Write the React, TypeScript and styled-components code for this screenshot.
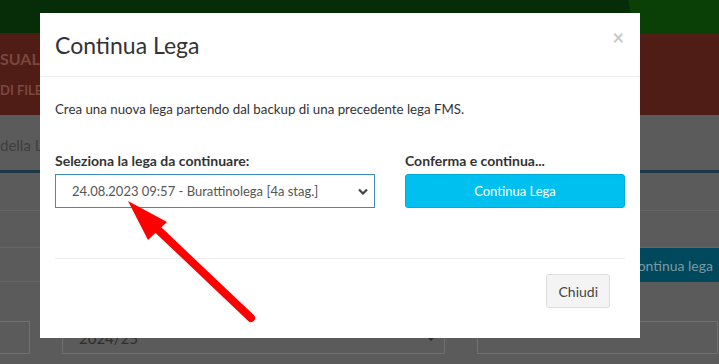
import React from 'react';
import styled, { createGlobalStyle } from 'styled-components';

// == styles =======================================================================================
const GlobalStyle = createGlobalStyle`
  html, body {
    margin: 0;
    padding: 0;
    width: 719px;
    height: 364px;
    overflow: hidden;
    background: #5b5b5b;
  }
  * {
    box-sizing: border-box;
  }
`;

const Page = styled.div`
  position: relative;
  width: 719px;
  height: 364px;
  overflow: hidden;
  font-family: Lato, 'Noto Sans', sans-serif;
  background: #5b5b5b;
`;

const TopBar = styled.div`
  height: 33px;
  background: linear-gradient( 78deg, #062c08 0, #062c08 87.5%, #0a4006 87.5% );
`;

const Banner = styled.div`
  height: 82px;
  background: #4f1c16;
  color: #7b4740;
  font-weight: 700;
  display: flex;
  flex-direction: column;
  gap: 14px;
  padding: 16px 0 0 0;
`;

const BannerTitle = styled.div`
  font-size: 16px;
`;

const BannerSub = styled.div`
  font-size: 13px;
`;

const Tabs = styled.div`
  height: 58px;
  border-bottom: 3px solid #1c3747;
  color: #3f3f3f;
  font-size: 15px;
  padding: 21px 0 0 0;
`;

const Row = styled.div<{ $h: number }>`
  height: ${ ( p ) => p.$h }px;
  border-bottom: 1px solid #666;
  display: flex;
  justify-content: flex-end;
`;

const GhostButton = styled.div`
  width: 89px;
  height: 34px;
  background: #00485c;
  color: #7a9aa3;
  font-size: 14px;
  display: flex;
  align-items: center;
  justify-content: flex-end;
  padding-right: 6px;
`;

const Inputs = styled.div`
  display: grid;
  grid-template-columns: 31px 383px 241px;
  column-gap: 32px;
  margin-top: 39px;
  margin-left: -1px;
`;

const GhostInput = styled.div`
  height: 33px;
  border: 1px solid #707070;
  color: #2e2e2e;
  font-size: 15px;
  display: flex;
  align-items: center;
  justify-content: space-between;
  padding: 0 8px 0 16px;
`;

const Backdrop = styled.div`
  position: absolute;
  inset: 0;
  display: flex;
  justify-content: flex-start;
  align-items: flex-start;
  padding: 13px 0 0 40px;
`;

const Modal = styled.div`
  width: 600px;
  height: 325px;
  background: #fff;
  color: #333;
  display: flex;
  flex-direction: column;
`;

const ModalHeader = styled.div`
  height: 64px;
  border-bottom: 1px solid #eee;
  display: flex;
  align-items: center;
  justify-content: space-between;
  padding: 0 15px;
`;

const Title = styled.h4`
  margin: 0;
  font-weight: 400;
  font-size: 23px;
  color: #333;
`;

const Close = styled.span`
  color: #c9c9c9;
  font-size: 20px;
  font-weight: 700;
  margin-top: -16px;
  margin-right: 1px;
`;

const ModalBody = styled.div`
  padding: 22px 15px 0;
  font-size: 14px;
`;

const Lead = styled.p`
  margin: 0 0 33px;
  line-height: 20px;
  font-size: 13.3px;
`;

const FormRow = styled.div`
  display: grid;
  grid-template-columns: 320px 220px;
  column-gap: 30px;
`;

const Label = styled.label`
  display: block;
  font-weight: 700;
  font-size: 14px;
  margin-bottom: 4px;
  line-height: 18px;
`;

const Select = styled.div`
  height: 34px;
  border: 1px solid #3c8dbc;
  color: #555;
  font-size: 13px;
  display: flex;
  align-items: center;
  justify-content: space-between;
  padding: 0 6px 0 16px;
`;

const PrimaryButton = styled.button`
  width: 100%;
  height: 34px;
  border: 1px solid #00acd6;
  border-radius: 3px;
  background: #00c0ef;
  color: #fff;
  font-family: inherit;
  font-size: 13px;
`;

const Rule = styled.hr`
  border: 0;
  border-top: 1px solid #eee;
  margin: 50px 15px 0;
`;

const ModalFooter = styled.div`
  display: flex;
  justify-content: flex-end;
  padding: 15px 30px 0;
`;

const DefaultButton = styled.button`
  height: 34px;
  padding: 0 11px;
  border: 1px solid #ddd;
  border-radius: 3px;
  background: #f4f4f4;
  color: #444;
  font-family: inherit;
  font-size: 14px;
`;

const Arrow = styled.svg`
  position: absolute;
  left: 0;
  top: 0;
  pointer-events: none;
`;

// == components ===================================================================================
function Chevron( { color }: { color: string } ) {
  return <svg width="10" height="7" viewBox="0 0 10 7">
    <path d="M1 1.5 L5 5.5 L9 1.5" fill="none" stroke={ color } strokeWidth="2.2" />
  </svg>;
}

export default function App() {
  return <>
    <GlobalStyle />
    <Page>
      <TopBar />
      <Banner>
        <BannerTitle>SUALI</BannerTitle>
        <BannerSub>DI FILE</BannerSub>
      </Banner>
      <Tabs>della L</Tabs>
      <Row $h={ 38 } />
      <Row $h={ 37 } />
      <Row $h={ 34 }>
        <GhostButton>ontinua lega</GhostButton>
      </Row>
      <Inputs>
        <GhostInput />
        <GhostInput>
          <span>2024/25</span>
          <Chevron color="#2e2e2e" />
        </GhostInput>
        <GhostInput />
      </Inputs>

      <Backdrop>
        <Modal>
          <ModalHeader>
            <Title>Continua Lega</Title>
            <Close>×</Close>
          </ModalHeader>
          <ModalBody>
            <Lead>Crea una nuova lega partendo dal backup di una precedente lega FMS.</Lead>
            <FormRow>
              <div>
                <Label>Seleziona la lega da continuare:</Label>
                <Select>
                  <span>24.08.2023 09:57 - Burattinolega [4a stag.]</span>
                  <Chevron color="#444" />
                </Select>
              </div>
              <div>
                <Label>Conferma e continua...</Label>
                <PrimaryButton>Continua Lega</PrimaryButton>
              </div>
            </FormRow>
          </ModalBody>
          <Rule />
          <ModalFooter>
            <DefaultButton>Chiudi</DefaultButton>
          </ModalFooter>
        </Modal>
      </Backdrop>

      <Arrow width="719" height="364" viewBox="0 0 719 364">
        <line x1="251" y1="318" x2="152" y2="224" stroke="#ff0000" strokeWidth="8" strokeLinecap="round" />
        <polygon points="128,201 167,222 148,240" fill="#ff0000" />
      </Arrow>
    </Page>
  </>;
}
